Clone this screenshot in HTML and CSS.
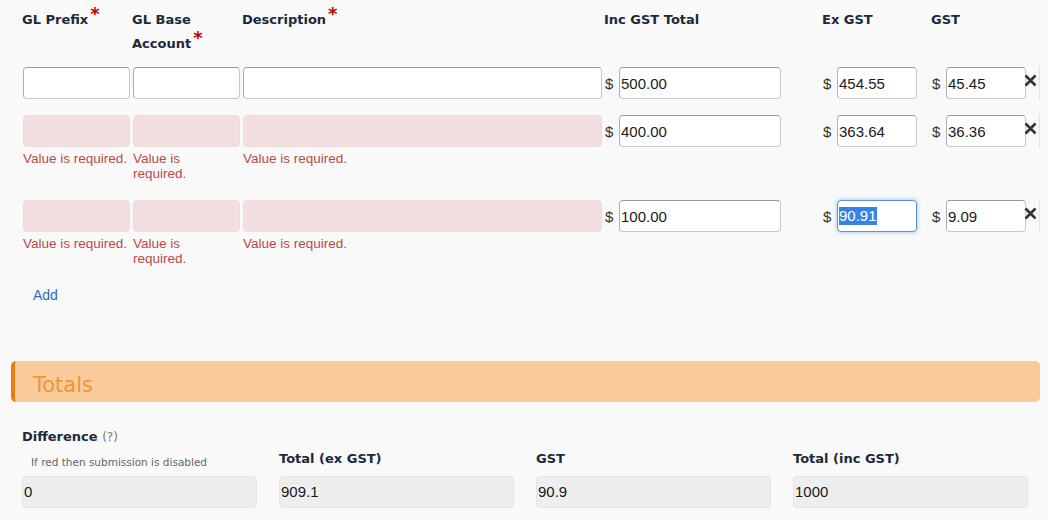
FILE: index.html
```html
<!DOCTYPE html>
<html>
<head>
<meta charset="utf-8">
<link rel="stylesheet" href="styles.css">
</head>
<body>
<div class="page">
  <div class="lines">
    <div class="grid head">
      <div class="hcell">GL Prefix<span class="req">*</span></div>
      <div class="hcell">GL Base Account<span class="req">*</span></div>
      <div class="hcell">Description<span class="req">*</span></div>
      <div class="hcell">Inc GST Total</div>
      <div class="hcell">Ex GST</div>
      <div class="hcell">GST</div>
    </div>

    <div class="grid line">
      <div class="cell"><input class="field" type="text"></div>
      <div class="cell"><input class="field" type="text"></div>
      <div class="cell"><input class="field" type="text"></div>
      <div class="cell money"><span class="cur">$</span><input class="field amt-inc" type="text" value="500.00"></div>
      <div class="cell money"><span class="cur">$</span><input class="field amt" type="text" value="454.55"></div>
      <div class="cell money last"><span class="cur">$</span><input class="field amt" type="text" value="45.45"><span class="remove"><svg width="13" height="13" viewBox="0 0 13 13"><path d="M1.5 1.5 L11.5 11.5 M11.5 1.5 L1.5 11.5" stroke="#333" stroke-width="2.6" fill="none"/></svg></span></div>
    </div>

    <div class="grid line">
      <div class="cell"><input class="field invalid" type="text"><div class="err">Value is required.</div></div>
      <div class="cell"><input class="field invalid" type="text"><div class="err">Value is required.</div></div>
      <div class="cell"><input class="field invalid" type="text"><div class="err">Value is required.</div></div>
      <div class="cell money"><span class="cur">$</span><input class="field amt-inc" type="text" value="400.00"></div>
      <div class="cell money"><span class="cur">$</span><input class="field amt" type="text" value="363.64"></div>
      <div class="cell money last"><span class="cur">$</span><input class="field amt" type="text" value="36.36"><span class="remove"><svg width="13" height="13" viewBox="0 0 13 13"><path d="M1.5 1.5 L11.5 11.5 M11.5 1.5 L1.5 11.5" stroke="#333" stroke-width="2.6" fill="none"/></svg></span></div>
    </div>

    <div class="grid line">
      <div class="cell"><input class="field invalid" type="text"><div class="err">Value is required.</div></div>
      <div class="cell"><input class="field invalid" type="text"><div class="err">Value is required.</div></div>
      <div class="cell"><input class="field invalid" type="text"><div class="err">Value is required.</div></div>
      <div class="cell money"><span class="cur">$</span><input class="field amt-inc" type="text" value="100.00"></div>
      <div class="cell money"><span class="cur">$</span><div class="field amt focused"><span class="sel">90.91</span></div></div>
      <div class="cell money last"><span class="cur">$</span><input class="field amt" type="text" value="9.09"><span class="remove"><svg width="13" height="13" viewBox="0 0 13 13"><path d="M1.5 1.5 L11.5 11.5 M11.5 1.5 L1.5 11.5" stroke="#333" stroke-width="2.6" fill="none"/></svg></span></div>
    </div>

    <div class="add-row"><a class="add">Add</a></div>
  </div>

  <div class="section-bar">Totals</div>

  <div class="totals">
    <div class="tcol">
      <div class="tlabel">Difference <span class="help">(?)</span></div>
      <div class="hint">If red then submission is disabled</div>
      <div class="tfield">0</div>
    </div>
    <div class="tcol">
      <div class="tlabel">Total (ex GST)</div>
      <div class="tfield">909.1</div>
    </div>
    <div class="tcol">
      <div class="tlabel">GST</div>
      <div class="tfield">90.9</div>
    </div>
    <div class="tcol">
      <div class="tlabel">Total (inc GST)</div>
      <div class="tfield">1000</div>
    </div>
  </div>
</div>
</body>
</html>
```

FILE: styles.css
```css
* { box-sizing: border-box; }

html, body {
  margin: 0;
  padding: 0;
  background: #f9f9f9;
  font-family: "DejaVu Sans", Verdana, sans-serif;
  color: #1b2a3a;
  overflow: hidden;
}

.page {
  width: 1048px;
  height: 520px;
  padding: 8px 8px 0 11px;
}

.lines {
  padding-left: 11px;
}

.grid {
  display: grid;
  grid-template-columns: 110px 110px 362px 218px 109px 109px;
}

.head {
  margin-bottom: 11px;
}

.hcell {
  font-size: 13px;
  font-weight: bold;
  line-height: 24px;
  padding-right: 30px;
  color: #1b2a3a;
}

.hcell:nth-child(2) { padding-right: 40px; }

.req {
  color: #c00000;
  font-size: 18px;
  position: relative;
  top: -4px;
  margin-left: 2px;
  line-height: 0;
}

.line {
  margin-bottom: 15px;
  align-items: start;
}

.cell {
  padding: 0 2px 0 1px;
}

.field {
  display: block;
  width: 100%;
  height: 32px;
  margin: 0;
  padding: 0 1px;
  border: 1px solid #c9c9c9;
  border-top-color: #9a9a9a;
  border-left-color: #b0b0b0;
  border-radius: 4px;
  background: #fff;
  font-family: "Liberation Sans", Arial, sans-serif;
  font-size: 15px;
  color: #1a1a1a;
  outline: none;
}

.field.invalid {
  background: #f2dede;
  border: 1px solid #f0dbdb;
}

.err {
  margin: 4px 0 4px;
  font-family: "Liberation Sans", Arial, sans-serif;
  font-size: 13.5px;
  line-height: 15px;
  color: #b94a48;
  white-space: nowrap;
}

.cell:nth-child(2) .err {
  white-space: normal;
  padding-right: 50px;
}

.money {
  display: flex;
  align-items: center;
  padding: 0;
}

.cur {
  font-family: "Liberation Sans", Arial, sans-serif;
  font-size: 15px;
  color: #333;
  width: 15px;
  padding-left: 1px;
  flex: none;
}

.field.amt-inc {
  width: 162px;
  flex: none;
}

.field.amt {
  width: 80px;
  flex: none;
}

.field.focused {
  display: flex;
  align-items: center;
  border: 1px solid #5b95d6;
  box-shadow: 0 0 4px rgba(82, 150, 230, 0.6);
}

.sel {
  background: #3584e4;
  color: #fff;
  line-height: 18px;
}

.last {
  border-right: 1px solid #e4e4e4;
  height: 34px;
  margin-top: -1px;
}

.remove {
  display: flex;
  width: 13px;
  height: 13px;
  margin-left: -2px;
  margin-top: -5px;
}

.add-row {
  padding: 0 0 0 11px;
  line-height: 20px;
}

.add {
  font-family: "Liberation Sans", Arial, sans-serif;
  font-size: 14px;
  color: #2a6db5;
  cursor: pointer;
}

.section-bar {
  margin-top: 56px;
  height: 41px;
  width: 1029px;
  background: #f9cb9a;
  border-left: 4px solid #e97d0f;
  border-radius: 5px;
  padding-left: 18px;
  font-size: 21px;
  line-height: 49px;
  color: #ef9533;
}

.totals {
  margin-top: 26px;
  padding-left: 11px;
  display: grid;
  grid-template-columns: repeat(4, 235px);
  column-gap: 22px;
  align-items: end;
}

.tlabel {
  font-size: 13px;
  font-weight: bold;
  line-height: 18px;
  margin-bottom: 8px;
  color: #1b2a3a;
}

.tcol:first-child .tlabel {
  margin-bottom: 8px;
}

.help {
  font-weight: normal;
  font-size: 12px;
  color: #777;
}

.hint {
  font-size: 10.5px;
  line-height: 16px;
  color: #666;
  padding-left: 9px;
  margin-bottom: 6px;
}

.tfield {
  height: 32px;
  background: #eeeeee;
  border: 1px solid #e4e4e4;
  border-radius: 4px;
  padding: 0 1px;
  font-family: "Liberation Sans", Arial, sans-serif;
  font-size: 15px;
  line-height: 30px;
  color: #1a1a1a;
}
```
